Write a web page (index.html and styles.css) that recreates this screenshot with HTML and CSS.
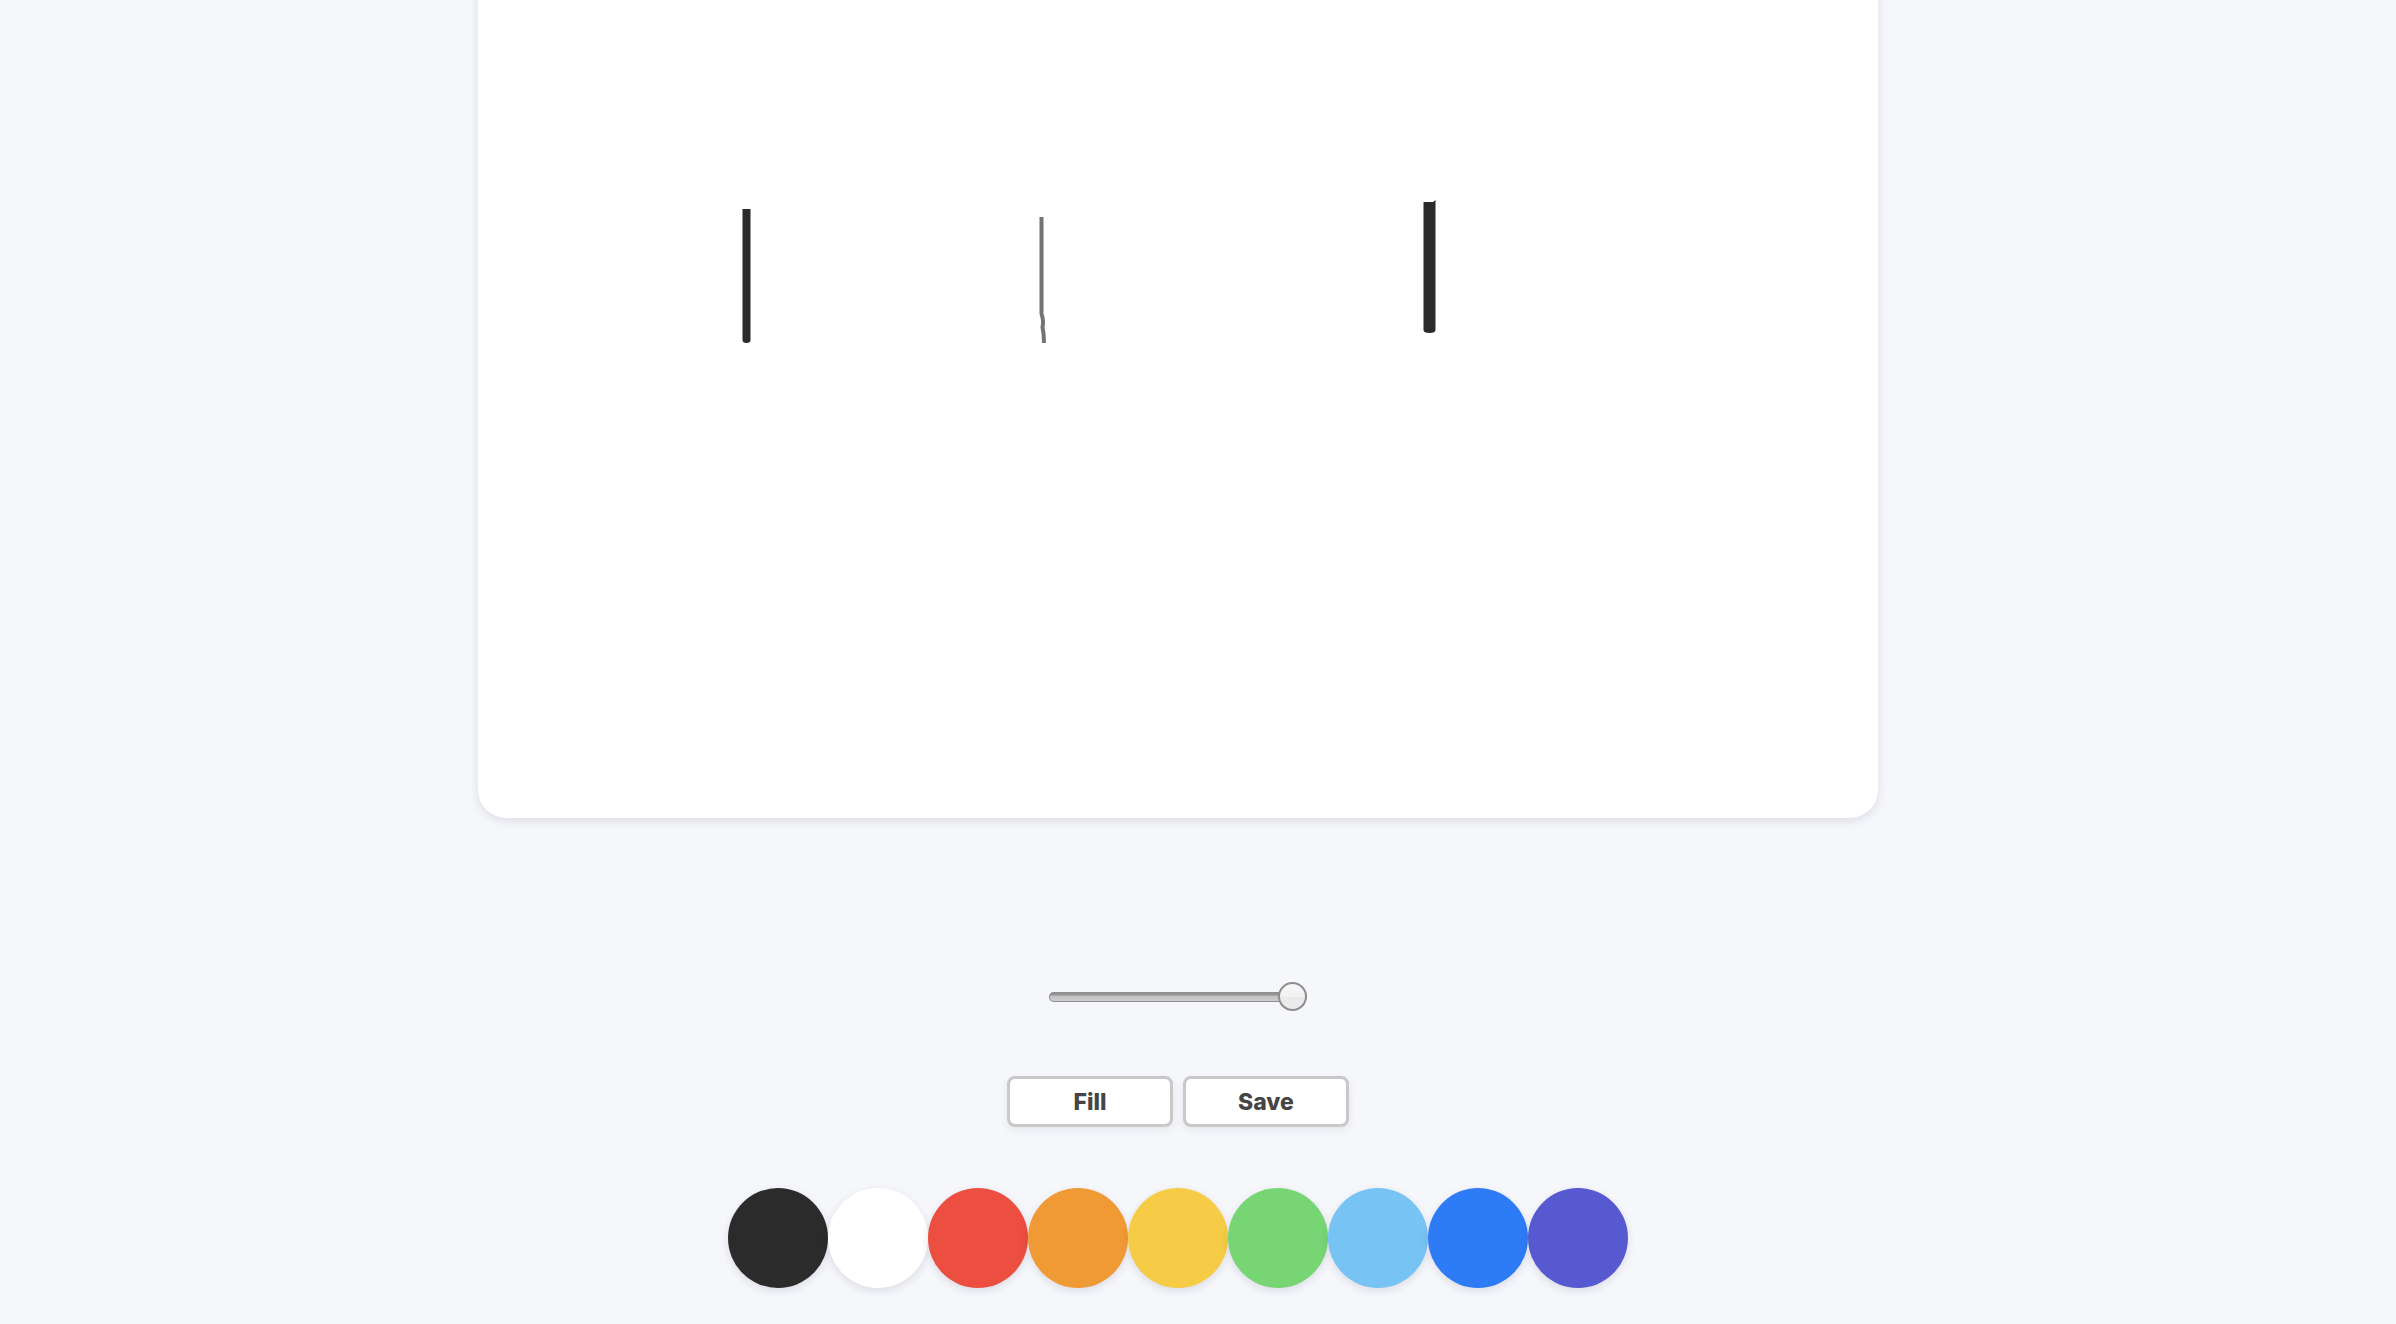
FILE: index.html
```html
<!DOCTYPE html>
<html lang="en">
<head>
<meta charset="utf-8">
<title>Sketch</title>
<link rel="stylesheet" href="styles.css">
</head>
<body>
<main class="app">
  <div class="card">
    <svg class="drawing" width="1400" height="858" viewBox="0 0 1400 858">
      <path d="M264.5 249 L272.5 249 L272.5 380 Q272.5 383 268.5 383 Q264.5 383 264.5 380 Z" fill="#2b2b2b"/>
      <path d="M563.5 257 L563.5 354 Q566 360 564.5 367 Q566 374 566 383" stroke="#5a5a5a" stroke-width="4" fill="none" opacity="0.85"/>
      <path d="M945.5 242 L955 242 L957.5 240 L957.5 370 Q957.5 373 951.5 373 Q945.5 373 945.5 370 Z" fill="#2b2b2b"/>
    </svg>
  </div>
  <input class="size" type="range" min="1" max="20" value="20">
  <div class="actions">
    <button class="btn">Fill</button>
    <button class="btn">Save</button>
  </div>
  <div class="palette">
    <span class="swatch c-black"></span>
    <span class="swatch c-white"></span>
    <span class="swatch c-red"></span>
    <span class="swatch c-orange"></span>
    <span class="swatch c-yellow"></span>
    <span class="swatch c-green"></span>
    <span class="swatch c-sky"></span>
    <span class="swatch c-blue"></span>
    <span class="swatch c-purple"></span>
  </div>
</main>
</body>
</html>
```

FILE: styles.css
```css
html, body {
  margin: 0;
  padding: 0;
  background: #f6f7fb;
  overflow: hidden;
  height: 1324px;
}

.app {
  width: 2356px;
  display: flex;
  flex-direction: column;
  align-items: center;
  font-family: "Inter", "Liberation Sans", sans-serif;
}

.card {
  width: 1400px;
  height: 858px;
  margin-top: -40px;
  background: #ffffff;
  border-radius: 28px;
  box-shadow: 0 3px 10px rgba(40, 44, 70, 0.12);
  overflow: hidden;
}

.drawing {
  display: block;
}

.size {
  -webkit-appearance: none;
  appearance: none;
  width: 258px;
  height: 30px;
  margin: 164px 0 0 0;
  padding: 0;
  background: transparent;
}

.size::-webkit-slider-runnable-track {
  height: 10px;
  border-radius: 5px;
  background: linear-gradient(#8a8a8a 0, #9a9a9a 30%, #c4c4c4 45%, #cfcfcf 100%);
  box-shadow: inset 0 0 0 1px #8f8f8f;
}

.size::-webkit-slider-thumb {
  -webkit-appearance: none;
  appearance: none;
  width: 29px;
  height: 29px;
  margin-top: -10px;
  border-radius: 50%;
  border: 2px solid #8e8e8e;
  box-sizing: border-box;
  background: linear-gradient(#f7f7f7 0, #f2f2f2 50%, #e9e9e9 51%, #ececec 100%);
}

.actions {
  display: flex;
  gap: 10px;
  margin-top: 64px;
}

.btn {
  width: 166px;
  height: 51px;
  box-sizing: border-box;
  border: 3px solid #c9c9c9;
  border-radius: 8px;
  background: #ffffff;
  color: #454545;
  font-family: "Inter", "Liberation Sans", sans-serif;
  font-weight: 800;
  font-size: 23px;
  padding: 0;
  box-shadow: 0 3px 8px rgba(40, 44, 70, 0.08);
}

.palette {
  display: flex;
  margin-top: 61px;
}

.swatch {
  width: 100px;
  height: 100px;
  border-radius: 50%;
  box-shadow: 0 3px 8px rgba(40, 44, 70, 0.12);
}

.c-black { background: #2b2b2b; }
.c-white { background: #ffffff; }
.c-red { background: #ec4e40; }
.c-orange { background: #f09a36; }
.c-yellow { background: #f6cb45; }
.c-green { background: #77d574; }
.c-sky { background: #77c4f4; }
.c-blue { background: #2e7bf6; }
.c-purple { background: #5659cf; }
```
